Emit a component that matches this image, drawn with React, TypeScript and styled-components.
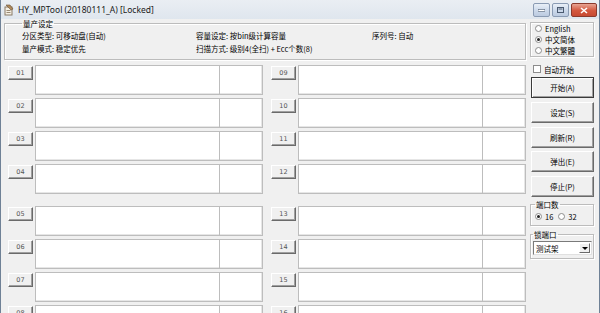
import styled, { createGlobalStyle } from "styled-components";

const GlobalStyle = createGlobalStyle`
  html, body {
    margin: 0;
    padding: 0;
    background: #f0f0f0;
  }
  body {
    font-family: "Noto Sans CJK SC", "Noto Sans", sans-serif;
    font-size: 7.5px;
    color: #000;
  }
`;

const Window = styled.div`
  width: 600px;
  height: 313px;
  box-sizing: border-box;
  overflow: hidden;
  display: flex;
  flex-direction: column;
  border-left: 1px solid #6f8196;
  border-right: 1px solid #6f8196;
  background: #f0f0f0;
`;

const TitleBar = styled.div`
  height: 19px;
  flex: none;
  display: flex;
  align-items: center;
  padding: 0 2px 0 3px;
  background: linear-gradient(to bottom, #eaeef3, #dfe6ee);
`;

const Title = styled.div`
  flex: 1;
  margin-left: 4px;
  font-family: "Noto Sans", "Open Sans", sans-serif;
  font-size: 8.5px;
  color: #1a1a1a;
`;

const CaptionGroup = styled.div`
  display: flex;
  align-self: flex-start;
  margin-top: 3px;
  gap: 2px;
`;

const CaptionButton = styled.div<{ $close?: boolean }>`
  width: ${(p) => (p.$close ? "24px" : "15px")};
  height: 12px;
  display: flex;
  align-items: center;
  justify-content: center;
  border: 1px solid ${(p) => (p.$close ? "#8b3a2d" : "#8a9bb3")};
  border-radius: 2px;
  background: ${(p) =>
    p.$close
      ? "linear-gradient(to bottom, #e8a493, #d3573e 55%, #c74a32)"
      : "linear-gradient(to bottom, #e9eff7, #cbd8ea 55%, #bccbe0)"};
`;

const Body = styled.div`
  flex: 1;
  display: flex;
  gap: 4px;
  padding: 0 3px 0 3px;
`;

const Main = styled.div`
  width: 522px;
  display: flex;
  flex-direction: column;
`;

const Side = styled.div`
  width: 64px;
  display: flex;
  flex-direction: column;
`;

const Group = styled.fieldset`
  margin: 0;
  min-width: 0;
  border: 1px solid #bcbcbc;
  box-shadow: inset 1px 1px 0 #fff, 1px 1px 0 #fff;
  padding: 0;
`;

const Legend = styled.legend`
  padding: 0 1px;
  margin-left: 0;
  font-size: 7.5px;
  line-height: 9px;
`;

const SettingsGroup = styled(Group)`
  padding: 1px 0 4px 17px;
`;

const SettingsGrid = styled.div`
  display: grid;
  grid-template-columns: 174px 176px auto;
  grid-auto-rows: 13px;
  align-items: center;
  white-space: nowrap;
`;

const PortArea = styled.div`
  margin: 5px 0 0 4px;
  display: grid;
  grid-template-columns: 1fr 1fr;
  column-gap: 8px;
`;

const PortColumn = styled.div`
  display: flex;
  flex-direction: column;
  gap: 3px;
`;

const PortRow = styled.div<{ $spaced?: boolean }>`
  display: flex;
  gap: 2px;
  height: 30px;
  margin-top: ${(p) => (p.$spaced ? "9px" : "0")};
`;

const PortButton = styled.div`
  width: 25px;
  height: 14px;
  box-sizing: border-box;
  margin-top: 1px;
  display: flex;
  align-items: center;
  justify-content: center;
  font-family: "DejaVu Sans", sans-serif;
  font-size: 6.5px;
  color: #555;
  background: #f0f0f0;
  border: 1px solid;
  border-color: #fff #6a6a6a #6a6a6a #fff;
  box-shadow: inset -1px -1px 0 #a0a0a0;
`;

const PortBox = styled.div`
  flex: 1;
  display: flex;
  background: #fff;
  border: 1px solid #bdbdbd;
  box-shadow: inset -1px -1px 0 #e6e6e6;
`;

const PortInfo = styled.div`
  flex: 1;
`;

const PortStatus = styled.div`
  width: 42px;
  border-left: 1px solid #bdbdbd;
`;

const LangGroup = styled(Group)`
  margin-top: 3px;
  padding: 0 0 0 4px;
`;

const OptionRow = styled.label`
  display: flex;
  align-items: center;
  gap: 3px;
  height: 11px;
  white-space: nowrap;
  font-family: "Noto Sans CJK SC", "DejaVu Sans", sans-serif;
`;

const Radio = styled.span<{ $on?: boolean }>`
  width: 7px;
  height: 7px;
  flex: none;
  box-sizing: border-box;
  border-radius: 50%;
  border: 1px solid #8c8c8c;
  background: #fff;
  display: flex;
  align-items: center;
  justify-content: center;
  &::after {
    content: "";
    width: 3px;
    height: 3px;
    border-radius: 50%;
    background: ${(p) => (p.$on ? "#222" : "transparent")};
  }
`;

const CheckRow = styled(OptionRow)`
  margin: 6px 0 2px 3px;
  height: 12px;
`;

const CheckBox = styled.span`
  width: 8px;
  height: 8px;
  box-sizing: border-box;
  border: 1px solid #8c8c8c;
  background: #fff;
`;

const ActionList = styled.div`
  display: flex;
  flex-direction: column;
  gap: 3.75px;
  padding-left: 1px;
`;

const ActionButton = styled.div<{ $default?: boolean }>`
  height: 21px;
  box-sizing: border-box;
  display: flex;
  align-items: center;
  justify-content: center;
  background: #f0f0f0;
  border: 1px solid;
  border-color: ${(p) =>
    p.$default ? "#3a3a3a" : "#fff #6a6a6a #6a6a6a #fff"};
  box-shadow: ${(p) =>
    p.$default
      ? "inset 1px 1px 0 #fff, inset -1px -1px 0 #a0a0a0"
      : "inset -1px -1px 0 #a0a0a0"};
`;

const PortCountGroup = styled(Group)`
  margin-top: 3px;
  padding: 2px 0 3px 4px;
`;

const InlineOptions = styled.div`
  display: flex;
  gap: 5px;
`;

const LockGroup = styled(Group)`
  margin-top: 4px;
  padding: 2px 1px 3px 2px;
`;

const Select = styled.div`
  height: 14px;
  box-sizing: border-box;
  display: flex;
  align-items: center;
  background: #fff;
  border: 1px solid;
  border-color: #7a7a7a #e0e0e0 #e0e0e0 #7a7a7a;
  padding-left: 2px;
`;

const SelectText = styled.span`
  flex: 1;
`;

const SelectArrow = styled.div`
  width: 11px;
  height: 10px;
  box-sizing: border-box;
  margin-right: 1px;
  display: flex;
  align-items: center;
  justify-content: center;
  background: #f0f0f0;
  border: 1px solid;
  border-color: #fff #6a6a6a #6a6a6a #fff;
  &::after {
    content: "";
    border-left: 3px solid transparent;
    border-right: 3px solid transparent;
    border-top: 3px solid #000;
  }
`;

const left = ["01", "02", "03", "04", "05", "06", "07", "08"];
const right = ["09", "10", "11", "12", "13", "14", "15", "16"];

function AppIcon() {
  return (
    <svg width="10" height="12" viewBox="0 0 10 12">
      <rect x="1" y="3" width="7" height="8" fill="#f4efe4" stroke="#8a7a66" strokeWidth="1" />
      <path d="M2 1 L6 1 L9 5 L7 6 Z" fill="#b08a5c" stroke="#6b5236" strokeWidth="0.6" />
      <rect x="2.5" y="6" width="4" height="1" fill="#9a8a74" />
      <rect x="2.5" y="8" width="4" height="1" fill="#9a8a74" />
    </svg>
  );
}

function Ports({ ids }: { ids: string[] }) {
  return (
    <PortColumn>
      {ids.map((id, i) => (
        <PortRow key={id} $spaced={i === 4}>
          <PortButton>{id}</PortButton>
          <PortBox>
            <PortInfo />
            <PortStatus />
          </PortBox>
        </PortRow>
      ))}
    </PortColumn>
  );
}

export default function App() {
  return (
    <>
      <GlobalStyle />
      <Window>
        <TitleBar>
          <AppIcon />
          <Title>HY_MPTool (20180111_A) [Locked]</Title>
          <CaptionGroup>
            <CaptionButton>
              <svg width="7" height="3" viewBox="0 0 7 3">
                <rect x="0" y="0.5" width="7" height="2" fill="#fff" stroke="#4a5a70" strokeWidth="0.6" />
              </svg>
            </CaptionButton>
            <CaptionButton>
              <svg width="7" height="6" viewBox="0 0 7 6">
                <rect x="0.5" y="0.5" width="6" height="5" fill="none" stroke="#4a5a70" strokeWidth="1" />
                <rect x="1.5" y="1.5" width="4" height="1" fill="#4a5a70" />
              </svg>
            </CaptionButton>
            <CaptionButton $close>
              <svg width="8" height="7" viewBox="0 0 8 7">
                <path d="M1 1 L7 6 M7 1 L1 6" stroke="#fff" strokeWidth="1.6" />
              </svg>
            </CaptionButton>
          </CaptionGroup>
        </TitleBar>
        <Body>
          <Main>
            <SettingsGroup>
              <Legend>量产设定</Legend>
              <SettingsGrid>
                <span>分区类型: 可移动盘(自动)</span>
                <span>容量设定: 按bin级计算容量</span>
                <span>序列号: 自动</span>
                <span>量产模式: 稳定优先</span>
                <span>扫描方式: 级别4(全扫) + Ecc个数(8)</span>
                <span />
              </SettingsGrid>
            </SettingsGroup>
            <PortArea>
              <Ports ids={left} />
              <Ports ids={right} />
            </PortArea>
          </Main>
          <Side>
            <LangGroup>
              <OptionRow>
                <Radio />
                English
              </OptionRow>
              <OptionRow>
                <Radio $on />
                中文简体
              </OptionRow>
              <OptionRow>
                <Radio />
                中文繁體
              </OptionRow>
            </LangGroup>
            <CheckRow>
              <CheckBox />
              自动开始
            </CheckRow>
            <ActionList>
              <ActionButton $default>开始(A)</ActionButton>
              <ActionButton>设定(S)</ActionButton>
              <ActionButton>刷新(R)</ActionButton>
              <ActionButton>弹出(E)</ActionButton>
              <ActionButton>停止(P)</ActionButton>
            </ActionList>
            <PortCountGroup>
              <Legend>端口数</Legend>
              <InlineOptions>
                <OptionRow>
                  <Radio $on />
                  16
                </OptionRow>
                <OptionRow>
                  <Radio />
                  32
                </OptionRow>
              </InlineOptions>
            </PortCountGroup>
            <LockGroup>
              <Legend>锁端口</Legend>
              <Select>
                <SelectText>测试架</SelectText>
                <SelectArrow />
              </Select>
            </LockGroup>
          </Side>
        </Body>
      </Window>
    </>
  );
}
